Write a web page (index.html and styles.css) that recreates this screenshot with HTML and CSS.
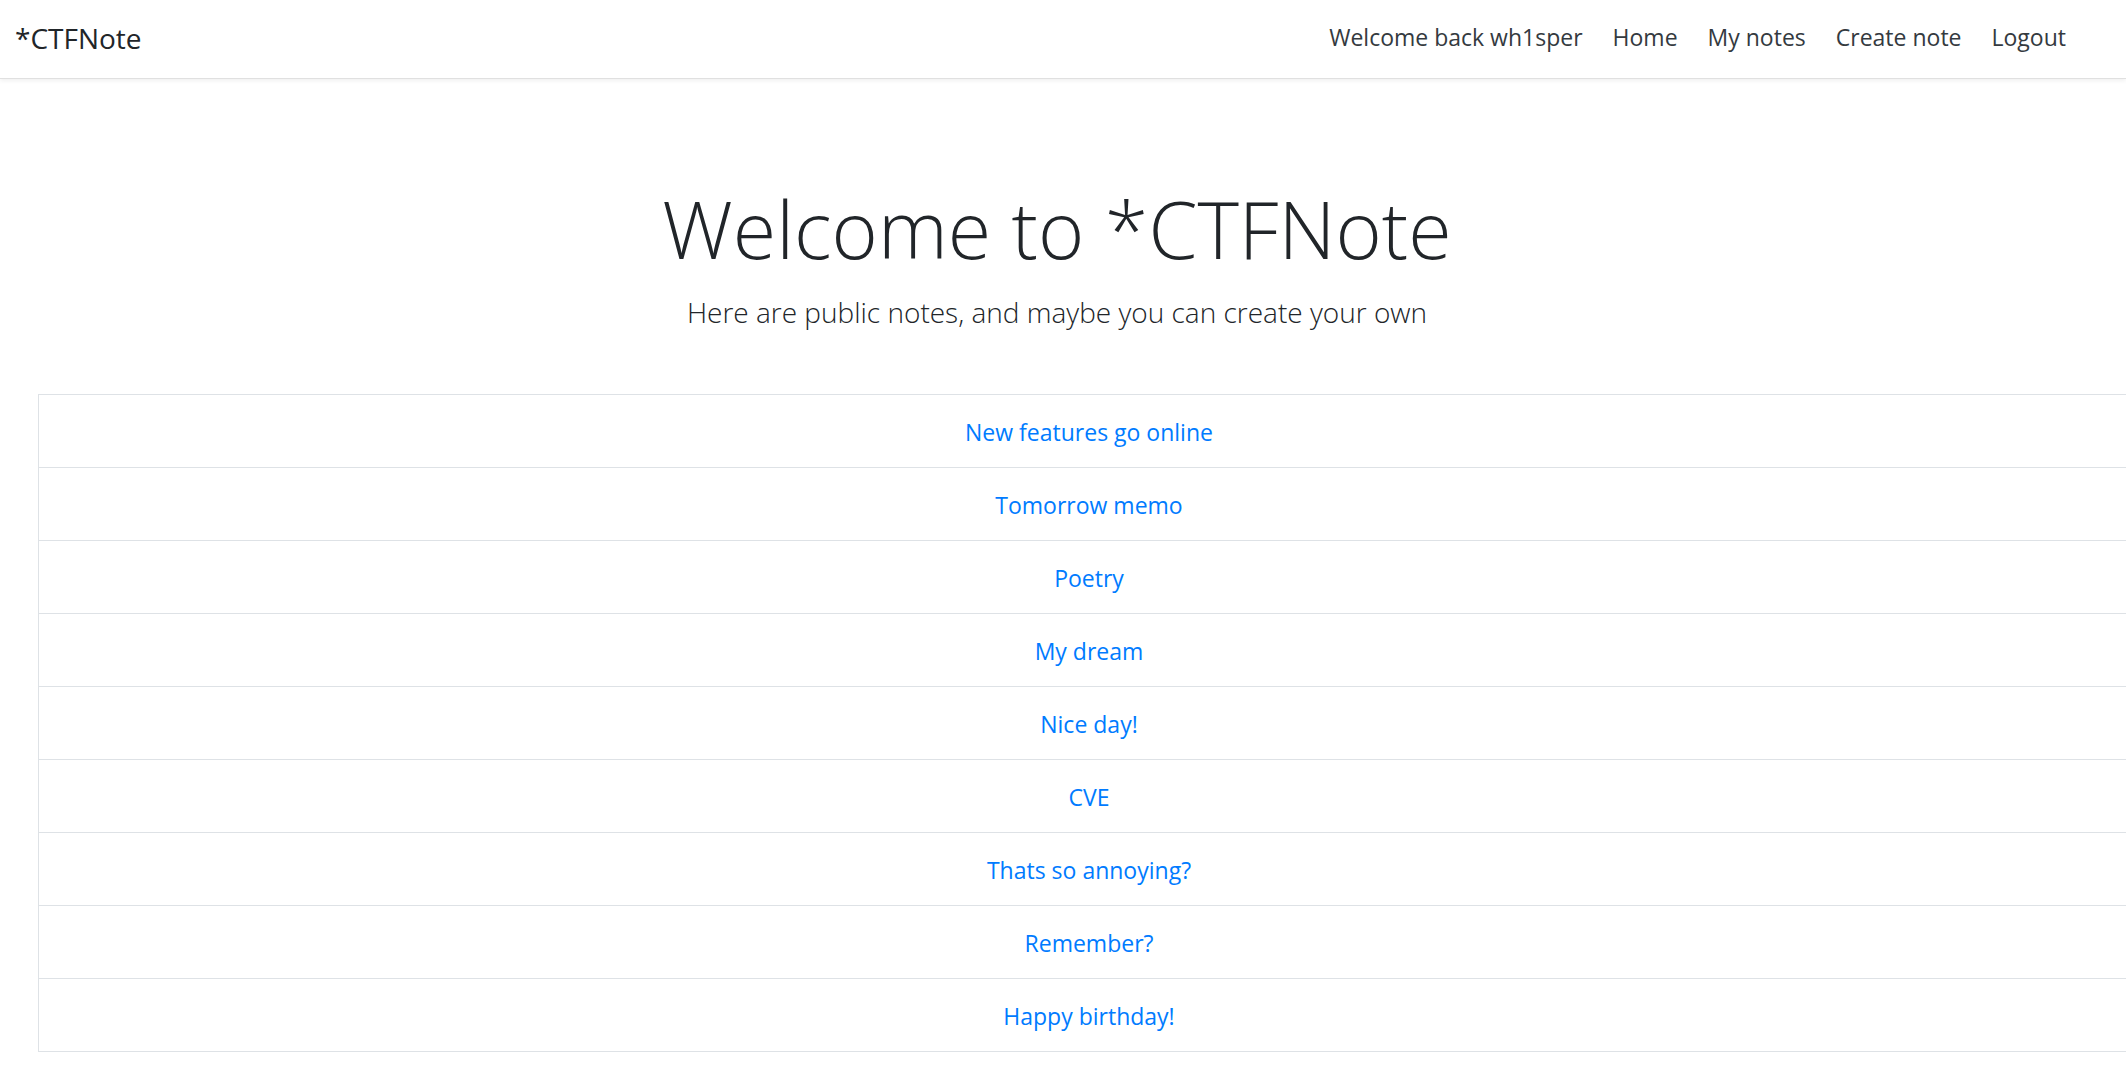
FILE: index.html
```html
<!DOCTYPE html>
<html lang="en">
<head>
<meta charset="utf-8">
<title>*CTFNote</title>
<link rel="stylesheet" href="styles.css">
</head>
<body>
<header class="navbar">
  <a class="brand" href="#">*CTFNote</a>
  <nav class="nav">
    <a class="nav-link" href="#">Welcome back wh1sper</a>
    <a class="nav-link" href="#">Home</a>
    <a class="nav-link" href="#">My notes</a>
    <a class="nav-link" href="#">Create note</a>
    <a class="nav-link" href="#">Logout</a>
  </nav>
</header>
<main class="main">
  <section class="hero">
    <h1 class="title">Welcome to *CTFNote</h1>
    <p class="lead">Here are public notes, and maybe you can create your own</p>
  </section>
  <div class="notes">
    <div class="note"><a href="#">New features go online</a></div>
    <div class="note"><a href="#">Tomorrow memo</a></div>
    <div class="note"><a href="#">Poetry</a></div>
    <div class="note"><a href="#">My dream</a></div>
    <div class="note"><a href="#">Nice day!</a></div>
    <div class="note"><a href="#">CVE</a></div>
    <div class="note"><a href="#">Thats so annoying?</a></div>
    <div class="note"><a href="#">Remember?</a></div>
    <div class="note"><a href="#">Happy birthday!</a></div>
  </div>
</main>
</body>
</html>
```
FILE: styles.css
```css
html, body {
  margin: 0;
  padding: 0;
  background: #fff;
  overflow: hidden;
}
body {
  font-family: "Open Sans", "Noto Sans", sans-serif;
  color: #212529;
  width: 2126px;
}
a { text-decoration: none; }

.navbar {
  height: 79px;
  display: flex;
  align-items: center;
  justify-content: space-between;
  padding: 0 0 0 15px;
  box-sizing: border-box;
  border-bottom: 1px solid #e0e0e0;
  box-shadow: 0 2px 4px rgba(0,0,0,0.06);
  position: relative;
}
.brand {
  font-size: 28px;
  color: #212529;
  line-height: 40px;
  margin-top: -2px;
}
.nav {
  display: flex;
  margin-right: 45px;
}
.nav-link {
  font-size: 23px;
  color: #343a40;
  padding: 0 15px;
  line-height: 33px;
  margin-top: -3px;
}

.hero {
  padding: 100px 12px 0 0;
  text-align: center;
}
.title {
  font-size: 79px;
  font-weight: 300;
  line-height: 100px;
  margin: 0;
}
.lead {
  font-size: 28px;
  font-weight: 300;
  line-height: 40px;
  margin: 13px 0 0;
}

.notes {
  margin: 62px 0 0 38px;
  width: 2100px;
  border-left: 1px solid #dee2e6;
  border-bottom: 1px solid #dee2e6;
}
.note {
  border-top: 1px solid #dee2e6;
  padding: 21px 0 18px;
  text-align: center;
  font-size: 23px;
  line-height: 33px;
}
.note a { color: #007bff; }
```
